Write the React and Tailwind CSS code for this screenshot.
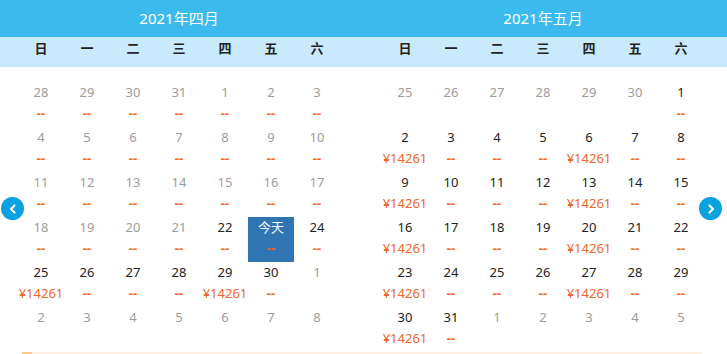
import React from "react";

const P = "¥14261";
const D = "--";

// [label, tone, value]  tone: g=grey, b=black, t=today
const april = [
  [["28","g",D],["29","g",D],["30","g",D],["31","g",D],["1","g",D],["2","g",D],["3","g",D]],
  [["4","g",D],["5","g",D],["6","g",D],["7","g",D],["8","g",D],["9","g",D],["10","g",D]],
  [["11","g",D],["12","g",D],["13","g",D],["14","g",D],["15","g",D],["16","g",D],["17","g",D]],
  [["18","g",D],["19","g",D],["20","g",D],["21","g",D],["22","b",D],["今天","t",D],["24","b",D]],
  [["25","b",P],["26","b",D],["27","b",D],["28","b",D],["29","b",P],["30","b",D],["1","g",""]],
  [["2","g",""],["3","g",""],["4","g",""],["5","g",""],["6","g",""],["7","g",""],["8","g",""]],
];

const may = [
  [["25","g",""],["26","g",""],["27","g",""],["28","g",""],["29","g",""],["30","g",""],["1","b",D]],
  [["2","b",P],["3","b",D],["4","b",D],["5","b",D],["6","b",P],["7","b",D],["8","b",D]],
  [["9","b",P],["10","b",D],["11","b",D],["12","b",D],["13","b",P],["14","b",D],["15","b",D]],
  [["16","b",P],["17","b",D],["18","b",D],["19","b",D],["20","b",P],["21","b",D],["22","b",D]],
  [["23","b",P],["24","b",D],["25","b",D],["26","b",D],["27","b",P],["28","b",D],["29","b",D]],
  [["30","b",P],["31","b",D],["1","g",""],["2","g",""],["3","g",""],["4","g",""],["5","g",""]],
];

const weekdays = ["日","一","二","三","四","五","六"];

function Cell({ c }) {
  const [label, tone, value] = c;
  const today = tone === "t";
  return (
    <div
      className={
        "w-[46px] h-[45px] flex flex-col items-center " +
        (today ? "bg-[#3075b3]" : "")
      }
    >
      <div
        className={
          "h-[20px] leading-[20px] text-[13px] " +
          (today ? "text-white" : tone === "g" ? "text-[#9c9c9c]" : "text-[#222]")
        }
      >
        {label}
      </div>
      <div
        className={
          "h-[22px] leading-[22px] " +
          (value === P
            ? "text-[13px] text-[#f1662a]"
            : "text-[13px] text-[#ff6400] font-bold")
        }
      >
        {value}
      </div>
    </div>
  );
}

function Grid({ rows }) {
  return (
    <div className="flex flex-col">
      {rows.map((r, i) => (
        <div key={i} className="flex">
          {r.map((c, j) => (
            <Cell key={j} c={c} />
          ))}
        </div>
      ))}
    </div>
  );
}

function Arrow({ dir }) {
  return (
    <div className="w-[23px] h-[23px] rounded-full bg-[#0aa1e0] flex items-center justify-center">
      <svg width="12" height="12" viewBox="0 0 12 12">
        {dir === "left" ? (
          <path d="M7.5 2.5 L4 6 L7.5 9.5" fill="none" stroke="white" strokeWidth="2.2" strokeLinecap="round" strokeLinejoin="round" />
        ) : (
          <path d="M4.5 2.5 L8 6 L4.5 9.5" fill="none" stroke="white" strokeWidth="2.2" strokeLinecap="round" strokeLinejoin="round" />
        )}
      </svg>
    </div>
  );
}

export default function App() {
  return (
    <div
      className="relative w-[727px] h-[354px] overflow-hidden bg-white"
      style={{ fontFamily: '"Noto Sans", "Noto Sans CJK SC", sans-serif' }}
    >
      <div className="h-[37px] bg-[#3bbbed] flex px-[18px] gap-[42px]">
        <div className="w-[322px] text-center text-white text-[15px] leading-[36px]">2021年四月</div>
        <div className="w-[322px] text-center text-white text-[15px] leading-[36px]">2021年五月</div>
      </div>
      <div className="h-[30px] bg-[#c9e9fd] flex px-[18px] gap-[42px]">
        {[0, 1].map((k) => (
          <div key={k} className="flex">
            {weekdays.map((w) => (
              <div key={w} className="w-[46px] text-center text-[13px] font-bold leading-[23px] text-[#222]">
                {w}
              </div>
            ))}
          </div>
        ))}
      </div>
      <div className="flex px-[18px] gap-[42px] pt-[15px]">
        <Grid rows={april} />
        <Grid rows={may} />
      </div>
      <div className="ml-[22px] w-[680px] h-[3px] bg-[#fdf0e3] flex">
        <div className="w-[10px] h-full bg-[#fcc88a]" />
      </div>
      <div className="absolute left-[1px] top-[197px]">
        <Arrow dir="left" />
      </div>
      <div className="absolute left-[699px] top-[197px]">
        <Arrow dir="right" />
      </div>
    </div>
  );
}
